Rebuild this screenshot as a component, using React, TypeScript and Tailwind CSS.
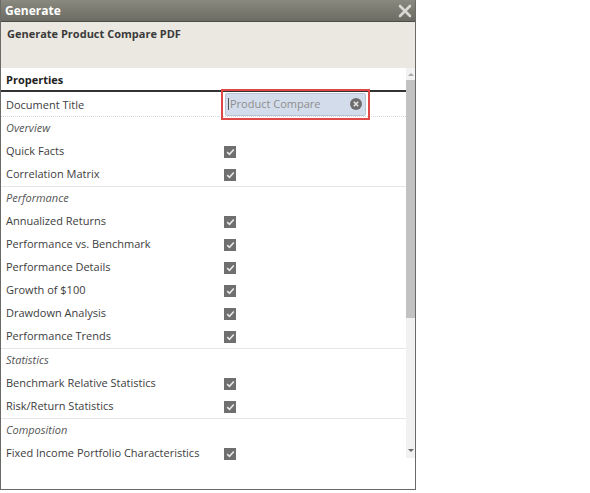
import { Fragment } from "react";

const GROUPS = [
  { title: "Overview", items: ["Quick Facts", "Correlation Matrix"] },
  {
    title: "Performance",
    items: [
      "Annualized Returns",
      "Performance vs. Benchmark",
      "Performance Details",
      "Growth of $100",
      "Drawdown Analysis",
      "Performance Trends",
    ],
  },
  { title: "Statistics", items: ["Benchmark Relative Statistics", "Risk/Return Statistics"] },
  { title: "Composition", items: ["Fixed Income Portfolio Characteristics"] },
];

function Check() {
  return (
    <span className="w-[12px] h-[12px] bg-[#6f6f6f] flex items-center justify-center">
      <svg width="9" height="8" viewBox="0 0 9 8">
        <path d="M1.2 4.2 L3.5 6.4 L7.8 1.5" fill="none" stroke="#e8e8e8" strokeWidth="1.6" />
      </svg>
    </span>
  );
}

export default function App() {
  return (
    <div className="w-[590px] h-[493px] bg-white" style={{ fontFamily: "'Open Sans', 'Noto Sans', sans-serif" }}>
      <div className="w-[416px] h-[490px] flex flex-col border-x border-b border-[#6a6a66]">
        {/* title bar */}
        <div className="h-[22px] flex items-center justify-between pl-[4px] pr-[3px] bg-gradient-to-b from-[#8a897f] to-[#6c6b63] border-b border-[#4d4c46]">
          <span className="text-[12px] font-bold text-white leading-none">Generate</span>
          <svg width="14" height="14" viewBox="0 0 14 14">
            <path d="M2 2 L12 12 M12 2 L2 12" stroke="#d9d8d2" strokeWidth="2.6" strokeLinecap="round" />
          </svg>
        </div>

        {/* subheader */}
        <div className="h-[46px] bg-[#ebe8e1] pl-[6px] pt-[4px] text-[11px] leading-[16px] font-bold text-[#3a3a3a]">
          Generate Product Compare PDF
        </div>

        {/* body */}
        <div className="flex-1 flex">
          <div className="flex-1 flex flex-col text-[11px] text-[#3d3d3d]">
            <div className="h-[24px] flex items-center pl-[5px] pt-[2px] border-b-2 border-[#333] font-bold text-[#222]">
              Properties
            </div>
            <div className="h-[25px] flex items-center pl-[5px] pt-[2px] border-b border-dotted border-[#d6d6d6]">
              <span className="w-[215px]">Document Title</span>
              <div className="-mt-[2px] border-2 border-[#e04848] p-[2px] w-[149px] h-[31px] flex">
                <div className="flex-1 bg-[#d3dcea] border border-[#b9c4d6] rounded-[2px] flex items-center pl-[2px] pr-[3px]">
                  <span className="w-[1px] h-[12px] bg-[#555] mr-[1px]" />
                  <span className="flex-1 text-[#8e8e8e] text-[11px]">Product Compare</span>
                  <svg width="12" height="12" viewBox="0 0 12 12">
                    <circle cx="6" cy="6" r="6" fill="#6d6d6d" />
                    <path d="M3.8 3.8 L8.2 8.2 M8.2 3.8 L3.8 8.2" stroke="#e6e6e6" strokeWidth="1.6" />
                  </svg>
                </div>
              </div>
            </div>
            {GROUPS.map((g, gi) => (
              <div key={g.title} className={gi < GROUPS.length - 1 ? "border-b border-[#e6e6e6]" : ""}>
                <div className="h-[23px] flex items-center pl-[5px] italic text-[#555]">{g.title}</div>
                {g.items.map((item) => (
                  <Fragment key={item}>
                    <div className="h-[23px] flex items-center pl-[5px]">
                      <span className="w-[218px]">{item}</span>
                      <Check />
                    </div>
                  </Fragment>
                ))}
              </div>
            ))}
          </div>

          {/* scrollbar */}
          <div className="w-[9px] flex flex-col">
            <div className="h-[390px] bg-[#f1f1f1] flex flex-col items-center">
              <svg width="6" height="8" viewBox="0 0 6 8" className="mt-[2px]">
                <path d="M0 6 L3 3 L6 6 Z" fill="#a9a9a9" />
              </svg>
              <div className="mt-[2px] w-full h-[238px] bg-[#c2c2c2]" />
              <div className="flex-1" />
              <svg width="6" height="8" viewBox="0 0 6 8" className="mb-[3px]">
                <path d="M0 2 L3 5 L6 2 Z" fill="#6a6a6a" />
              </svg>
            </div>
          </div>
        </div>
      </div>
    </div>
  );
}
